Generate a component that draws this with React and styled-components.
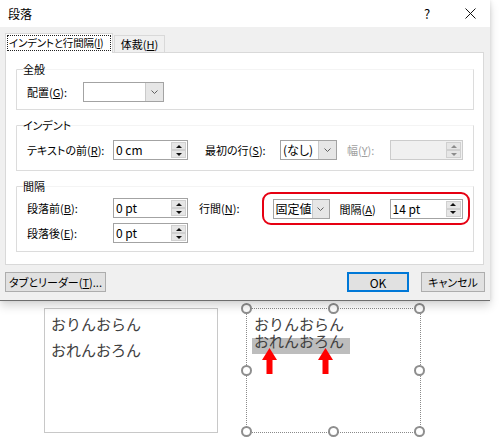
import React from "react";
import styled, { createGlobalStyle } from "styled-components";

const GlobalStyle = createGlobalStyle`
  html, body { margin:0; padding:0; background:#fff; }
  body { font-family: "Noto Sans CJK JP", "Noto Sans", sans-serif; }
`;

const Page = styled.div`
  width:503px;
  height:445px;
  overflow:hidden;
  background:#fff;
`;

const Dialog = styled.div`
  width:490px;
  height:300px;
  position:relative;
  z-index:1;
  display:flex;
  flex-direction:column;
  background:#f0f0f0;
  border-bottom:1px solid #6e6e6e;
  box-shadow:0 5px 9px rgba(0,0,0,0.16), 1px 0 3px rgba(0,0,0,0.08);
  font-size:11px;
  color:#000;
  font-feature-settings:"palt";
`;

const TitleBar = styled.div`
  height:27px;
  flex:none;
  background:#fff;
  display:flex;
  align-items:center;
  padding:0 5px 0 8px;
  font-size:12px;
`;

const TitleBtn = styled.div`
  width:30px;
  height:27px;
  display:flex;
  align-items:center;
  justify-content:center;
  margin-left:${p => p.$ml};
  font-size:13px;
`;

const Body = styled.div`
  flex:1;
  padding:6px 6px 0 5px;
  display:flex;
  flex-direction:column;
`;

const Tabs = styled.div`
  display:flex;
  align-items:flex-end;
  height:19px;
`;

const ActiveTab = styled.div`
  position:relative;
  z-index:1;
  box-sizing:border-box;
  width:108px;
  height:20px;
  margin-bottom:-1px;
  padding:1px 1px 2px 1px;
  background:#fff;
  border:1px solid #d9d9d9;
  border-bottom:none;
`;

const Focus = styled.div`
  height:100%;
  box-sizing:border-box;
  border:1px dotted #222;
  display:flex;
  align-items:center;
  padding-left:1px;
  white-space:nowrap;
  line-height:14px;
  font-size:10.5px;
  letter-spacing:-0.2px;
`;

const Tab = styled.div`
  box-sizing:border-box;
  width:51px;
  height:17px;
  margin-left:1px;
  border:1px solid #d9d9d9;
  border-bottom:none;
  background:#f0f0f0;
  display:flex;
  align-items:center;
  justify-content:center;
  line-height:14px;
  white-space:nowrap;
`;

const Panel = styled.div`
  box-sizing:border-box;
  width:479px;
  height:213px;
  background:#fff;
  border:1px solid #d9d9d9;
  padding:16px 9px 0 10px;
  display:flex;
  flex-direction:column;
  gap:15px;
`;

const Group = styled.div`
  border:1px solid #dcdcdc;
  border-top-color:#f4f4f4;
  padding-bottom:${p => p.$pb}px;
`;

const GroupTitle = styled.div`
  margin-top:-8px;
  height:14px;
  line-height:14px;
  display:flex;
  align-items:center;
  &::before {
    content:"";
    width:6px;
    height:1px;
    background:#dcdcdc;
  }
`;

const Rows = styled.div`
  padding-left:10px;
  margin-top:${p => p.$mt}px;
  display:flex;
  flex-direction:column;
  gap:5px;
`;

const Row = styled.div`
  display:flex;
  align-items:center;
  height:20px;
`;

const Label = styled.div`
  flex:none;
  width:${p => p.$w}px;
  margin-left:${p => p.$ml || 0}px;
  white-space:nowrap;
  color:${p => (p.$disabled ? "#a0a0a0" : "#000")};
`;

const Box = styled.div`
  flex:none;
  box-sizing:border-box;
  width:${p => p.$w}px;
  height:20px;
  display:flex;
  border:1px solid ${p => (p.$disabled ? "#cccccc" : "#a3a3a3")};
  background:${p => (p.$disabled ? "#f0f0f0" : "#fff")};
`;

const Value = styled.div`
  flex:1;
  padding-left:2px;
  line-height:18px;
  font-size:12px;
  white-space:nowrap;
  font-feature-settings:normal;
`;

const Spinner = styled.div`
  width:15px;
  display:flex;
  flex-direction:column;
  padding:1px 1px 1px 0;
`;

const SpinBtn = styled.div`
  flex:1;
  display:flex;
  align-items:center;
  justify-content:center;
  background:#e6e6e6;
  border:1px solid #d0d0d0;
  &::after {
    content:"";
    border-left:3px solid transparent;
    border-right:3px solid transparent;
    ${p => (p.$down ? "border-top" : "border-bottom")}:3px solid ${p => (p.$disabled ? "#8c8c8c" : "#111")};
  }
`;

const ComboText = styled.div`
  flex:1;
  padding-left:2px;
  line-height:18px;
  font-size:12px;
  white-space:nowrap;
`;

const ComboArrow = styled.div`
  width:17px;
  display:flex;
  align-items:center;
  justify-content:center;
  background:#e6e6e6;
  border-left:1px solid #cacaca;
`;

const RedFrame = styled.div`
  flex:none;
  box-sizing:border-box;
  width:208px;
  height:33px;
  margin:-6px 0 -7px;
  border:2.5px solid #e60012;
  border-radius:9px;
  padding-left:8.5px;
  display:flex;
  align-items:center;
`;

const Footer = styled.div`
  display:flex;
  align-items:center;
  margin-top:7px;
`;

const Button = styled.div`
  box-sizing:border-box;
  width:${p => p.$w}px;
  height:20px;
  margin-left:${p => p.$ml || "0"};
  margin-right:${p => p.$mr || 0}px;
  display:flex;
  align-items:center;
  justify-content:center;
  background:#e1e1e1;
  border:1px solid ${p => (p.$default ? "#0078d7" : "#adadad")};
  box-shadow:${p => (p.$default ? "inset 0 0 0 1px #0078d7" : "none")};
  white-space:nowrap;
  font-size:${p => (p.$big ? 12 : 11)}px;
`;

const Lower = styled.div`
  display:flex;
  padding-top:7px;
  font-size:15px;
  color:#404040;
`;

const PlainBox = styled.div`
  box-sizing:border-box;
  width:174px;
  height:125px;
  margin-left:44px;
  border:1px solid #c8c8c8;
  padding:2px 0 0 6px;
  line-height:26px;
`;

const SelBox = styled.div`
  position:relative;
  box-sizing:border-box;
  width:175px;
  height:125px;
  margin-left:28px;
  border:1px dotted #8a8a8a;
  padding:13px 0 0 5px;
`;

const Line = styled.div`
  width:98px;
  height:16px;
  line-height:16px;
  background:${p => (p.$hl ? "#bdbdbd" : "transparent")};
  white-space:nowrap;
  & > span {
    display:inline-block;
    padding-left:2px;
    transform:translateY(${p => p.$shift}px);
  }
`;

const Handle = styled.div`
  position:absolute;
  left:${p => p.$x};
  top:${p => p.$y};
  width:11px;
  height:11px;
  box-sizing:border-box;
  margin:-6px 0 0 -6px;
  border:2px solid #8e8e8e;
  border-radius:50%;
  background:#fff;
`;

const Arrow = styled.svg`
  position:absolute;
  left:${p => p.$x}px;
  top:39px;
`;

function Chevron() {
  return (
    <svg width="7" height="4" viewBox="0 0 7 4">
      <path d="M0.5 0.5 L3.5 3.5 L6.5 0.5" fill="none" stroke="#606060" strokeWidth="1" />
    </svg>
  );
}

function Combo({ w, text }) {
  return (
    <Box $w={w}>
      <ComboText>{text}</ComboText>
      <ComboArrow>
        <Chevron />
      </ComboArrow>
    </Box>
  );
}

function SpinBox({ w, value, disabled }) {
  return (
    <Box $w={w} $disabled={disabled}>
      <Value>{value}</Value>
      <Spinner>
        <SpinBtn $disabled={disabled} />
        <SpinBtn $down $disabled={disabled} />
      </Spinner>
    </Box>
  );
}

function RedArrow({ x }) {
  return (
    <Arrow $x={x} width="15" height="26" viewBox="0 0 15 26">
      <polygon points="0,12 7.5,0 15,12" fill="#ff0000" />
      <rect x="4.5" y="11" width="6" height="15" fill="#ff0000" />
    </Arrow>
  );
}

export default function App() {
  const handles = [
    ["0%", "0%"], ["50%", "0%"], ["100%", "0%"],
    ["0%", "50%"], ["100%", "50%"],
    ["0%", "100%"], ["50%", "100%"], ["100%", "100%"],
  ];
  return (
    <Page>
      <GlobalStyle />
      <Dialog>
        <TitleBar>
          段落
          <TitleBtn $ml="auto">?</TitleBtn>
          <TitleBtn $ml="13px">
            <svg width="11" height="11" viewBox="0 0 11 11">
              <path d="M0.5 0.5 L10.5 10.5 M10.5 0.5 L0.5 10.5" stroke="#111" strokeWidth="1" />
            </svg>
          </TitleBtn>
        </TitleBar>
        <Body>
          <Tabs>
            <ActiveTab>
              <Focus>インデントと行間隔(<u>I</u>)</Focus>
            </ActiveTab>
            <Tab>体裁(<u>H</u>)</Tab>
          </Tabs>
          <Panel>
            <Group $pb={7}>
              <GroupTitle>全般</GroupTitle>
              <Rows $mt={6}>
                <Row>
                  <Label $w={56}>配置(<u>G</u>):</Label>
                  <Combo w={81} text="" />
                </Row>
              </Rows>
            </Group>
            <Group $pb={10}>
              <GroupTitle>インデント</GroupTitle>
              <Rows $mt={8}>
                <Row>
                  <Label $w={86}>テキストの前(<u>R</u>):</Label>
                  <SpinBox w={75} value="0 cm" />
                  <Label $w={75} $ml={17}>最初の行(<u>S</u>):</Label>
                  <Combo w={57} text="(なし)" />
                  <Label $w={43} $ml={10} $disabled>幅(<u>Y</u>):</Label>
                  <SpinBox w={73} value="" disabled />
                </Row>
              </Rows>
            </Group>
            <Group $pb={8}>
              <GroupTitle>間隔</GroupTitle>
              <Rows $mt={5}>
                <Row>
                  <Label $w={86}>段落前(<u>B</u>):</Label>
                  <SpinBox w={75} value="0 pt" />
                  <Label $w={63} $ml={11}>行間(<u>N</u>):</Label>
                  <RedFrame>
                    <Combo w={57} text="固定値" />
                    <Label $w={50} $ml={10}>間隔(<u>A</u>)</Label>
                    <SpinBox w={73} value="14 pt" />
                  </RedFrame>
                </Row>
                <Row>
                  <Label $w={86}>段落後(<u>E</u>):</Label>
                  <SpinBox w={75} value="0 pt" />
                </Row>
              </Rows>
            </Group>
          </Panel>
          <Footer>
            <Button $w={101}>タブとリーダー(<u>T</u>)...</Button>
            <Button $w={62} $ml="auto" $default $big>OK</Button>
            <Button $w={64} $ml="12px" $mr={-1}>キャンセル</Button>
          </Footer>
        </Body>
      </Dialog>
      <Lower>
        <PlainBox>
          <div>おりんおらん</div>
          <div>おれんおろん</div>
        </PlainBox>
        <SelBox>
          <Line $shift={-6}><span>おりんおらん</span></Line>
          <Line $hl $shift={-5}><span>おれんおろん</span></Line>
          <RedArrow x={15} />
          <RedArrow x={71} />
          {handles.map(([x, y], i) => (
            <Handle key={i} $x={x} $y={y} />
          ))}
        </SelBox>
      </Lower>
    </Page>
  );
}
